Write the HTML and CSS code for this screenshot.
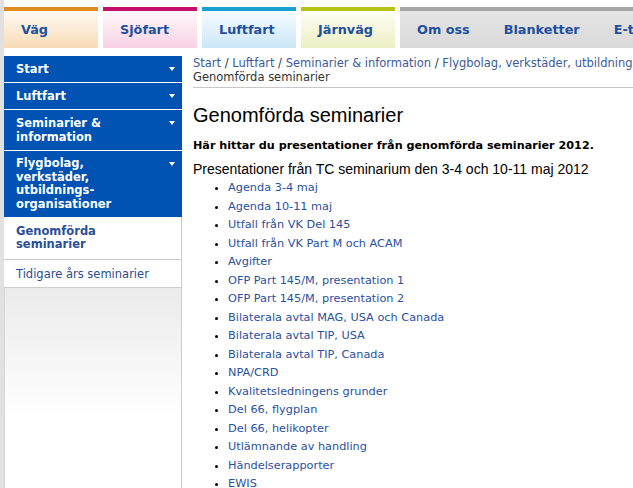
FILE: index.html
```html
<!DOCTYPE html>
<html>
<head>
    <title>Genomförda seminarier</title>
    <meta charset="UTF-8">
    <link rel="stylesheet" href="styles.css">
</head>
<body>
    <div class="page">
        <nav class="tabs">
            <a class="tab tab-vag" href="#">Väg</a>
            <a class="tab tab-sjo" href="#">Sjöfart</a>
            <a class="tab tab-luft" href="#">Luftfart</a>
            <a class="tab tab-jarn" href="#">Järnväg</a>
            <div class="tools">
                <a class="tool" href="#">Om oss</a>
                <a class="tool" href="#">Blanketter</a>
                <a class="tool" href="#">E-tjänster</a>
                <a class="tool" href="#">Kontakt</a>
            </div>
        </nav>
        <div class="layout">
            <aside class="sidebar">
                <ul class="menu">
                    <li class="menu-item open"><span>Start</span><i class="arrow"></i></li>
                    <li class="menu-item open"><span>Luftfart</span><i class="arrow"></i></li>
                    <li class="menu-item open"><span>Seminarier &amp;<br>information</span><i class="arrow"></i></li>
                    <li class="menu-item open"><span>Flygbolag,<br>verkstäder,<br>utbildnings-<br>organisationer</span><i class="arrow"></i></li>
                    <li class="menu-item current"><span>Genomförda<br>seminarier</span></li>
                    <li class="menu-item plain"><span>Tidigare års seminarier</span></li>
                </ul>
                <div class="sidebar-fill"></div>
            </aside>
            <main class="main">
                <div class="crumbs">
                    <a href="#">Start</a> / <a href="#">Luftfart</a> / <a href="#">Seminarier &amp; information</a> / <a href="#">Flygbolag, verkstäder, utbildningsorganisationer</a> / <span>Genomförda seminarier</span>
                </div>
                <h1>Genomförda seminarier</h1>
                <p class="lead">Här hittar du presentationer från genomförda seminarier 2012.</p>
                <h2>Presentationer från TC seminarium den 3-4 och 10-11 maj 2012</h2>
                <ul class="docs">
                    <li><a href="#">Agenda 3-4 maj</a></li>
                    <li><a href="#">Agenda 10-11 maj</a></li>
                    <li><a href="#">Utfall från VK Del 145</a></li>
                    <li><a href="#">Utfall från VK Part M och ACAM</a></li>
                    <li><a href="#">Avgifter</a></li>
                    <li><a href="#">OFP Part 145/M, presentation 1</a></li>
                    <li><a href="#">OFP Part 145/M, presentation 2</a></li>
                    <li><a href="#">Bilaterala avtal MAG, USA och Canada</a></li>
                    <li><a href="#">Bilaterala avtal TIP, USA</a></li>
                    <li><a href="#">Bilaterala avtal TIP, Canada</a></li>
                    <li><a href="#">NPA/CRD</a></li>
                    <li><a href="#">Kvalitetsledningens grunder</a></li>
                    <li><a href="#">Del 66, flygplan</a></li>
                    <li><a href="#">Del 66, helikopter</a></li>
                    <li><a href="#">Utlämnande av handling</a></li>
                    <li><a href="#">Händelserapporter</a></li>
                    <li><a href="#">EWIS</a></li>
                    <li><a href="#">Flygtidsbegränsningar</a></li>
                </ul>
            </main>
        </div>
    </div>
</body>
</html>
```

FILE: styles.css
```css
html, body {
    overflow: hidden;
}
body {
    margin: 0;
    background: #fff;
    font-family: "DejaVu Sans", Verdana, sans-serif;
    color: #000;
}
a {
    text-decoration: none;
}
.page {
    width: 980px;
    min-height: 600px;
    border-left: 4px solid #e2e0e0;
}
.tabs {
    display: flex;
    padding-top: 7px;
    height: 41px;
}
.tab {
    width: 77px;
    margin-right: 5px;
    padding-left: 17px;
    border-top: 4px solid;
    display: flex;
    align-items: center;
    padding-bottom: 1px;
    font-weight: bold;
    font-size: 12.8px;
    color: #1f4f9d;
}
.tab-vag {
    border-color: #e08c20;
    background: linear-gradient(#fffaf3, #f8dbb7);
}
.tab-sjo {
    border-color: #c2106c;
    background: linear-gradient(#fff8fb, #f7d2e5);
}
.tab-luft {
    border-color: #1e9fd2;
    background: linear-gradient(#f7fcff, #cbe6f8);
}
.tab-jarn {
    border-color: #b6c114;
    background: linear-gradient(#fefef4, #edefc4);
}
.tools {
    flex: 1;
    display: flex;
    border-top: 4px solid #a6a6a6;
    background: linear-gradient(#e4e4e4, #dadada);
}
.tool {
    display: flex;
    align-items: center;
    padding: 0 17px 1px;
    font-weight: bold;
    font-size: 12.8px;
    color: #1f4f9d;
}
.layout {
    display: flex;
    margin-top: 8px;
}
.sidebar {
    width: 178px;
    flex: none;
}
.menu {
    list-style: none;
    margin: 0;
    padding: 0;
}
.menu-item {
    display: flex;
    justify-content: space-between;
    align-items: flex-start;
    padding: 6px 7px 6px 12px;
    font-size: 11.5px;
    line-height: 14px;
    font-weight: bold;
}
.menu-item.open {
    background: #0053b3;
    color: #fff;
    border-bottom: 1px solid #fff;
}
.menu-item.open:nth-child(4) {
    border-bottom: none;
    line-height: 13.5px;
}
.arrow {
    width: 0;
    height: 0;
    margin-top: 5px;
    border-left: 3.5px solid transparent;
    border-right: 3.5px solid transparent;
    border-top: 4px solid #fff;
}
.menu-item.current {
    color: #2a4f98;
    line-height: 13px;
    padding: 8px 12px 8px 12px;
    border-right: 1px solid #ccc;
    border-bottom: 1px solid #ccc;
}
.menu-item.plain {
    color: #2d4c8e;
    font-weight: normal;
    padding: 7px 12px 6px;
    border-right: 1px solid #ccc;
    border-bottom: 1px solid #ccc;
}
.sidebar-fill {
    height: 300px;
    border-left: 1px solid #d6d6d6;
    border-right: 1px solid #ccc;
    background: linear-gradient(#ebebeb, #fff 130px);
}
.main {
    width: 580px;
    padding-left: 11px;
    padding-top: 1px;
}
.crumbs {
    font-size: 11.5px;
    line-height: 13.5px;
    color: #333;
    padding-bottom: 3px;
    border-bottom: 1px solid #c8c8c8;
    width: 780px;
    margin-right: -200px;
}
.crumbs a {
    color: #3b5a9c;
}
.crumbs span {
    display: block;
}
h1 {
    font-family: "Liberation Sans", Arial, sans-serif;
    font-size: 20px;
    font-weight: normal;
    margin: 15px 0 0;
    line-height: 24px;
}
.lead {
    font-size: 11.2px;
    font-weight: bold;
    margin: 11px 0 0;
    line-height: 16px;
}
h2 {
    font-family: "Liberation Sans", Arial, sans-serif;
    font-size: 14px;
    font-weight: normal;
    margin: 7px 0 0;
    line-height: 17px;
}
.docs {
    margin: 1px 0 0;
    padding-left: 35px;
    font-size: 11.3px;
    line-height: 18.5px;
}
.docs a {
    color: #2b50a0;
}
```
